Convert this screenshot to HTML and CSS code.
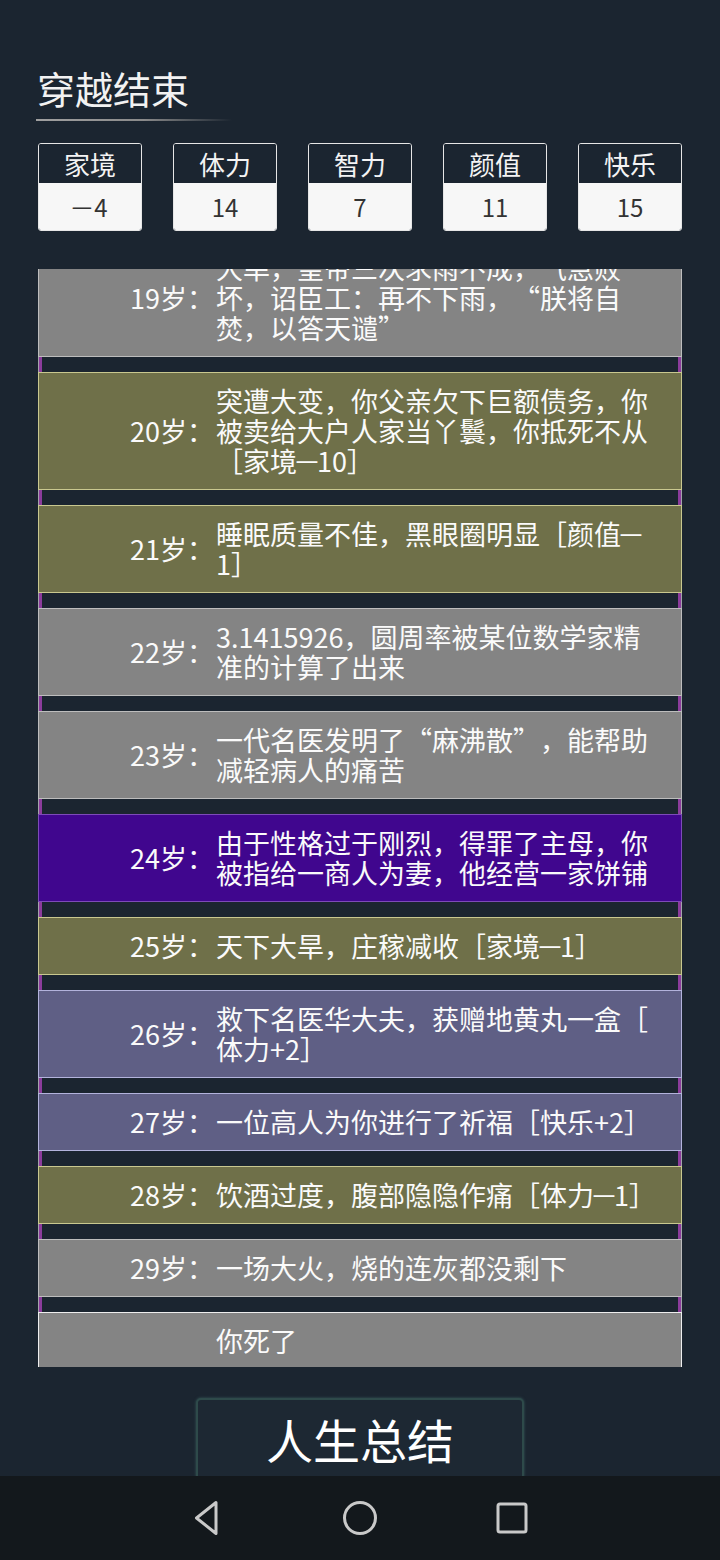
FILE: index.html
```html
<!DOCTYPE html>
<html lang="zh-CN">
<head>
<meta charset="utf-8">
<title>穿越结束</title>
<link rel="stylesheet" href="styles.css">
</head>
<body>
<div class="screen">
  <main class="app">
    <h1 class="title">穿越结束</h1>
    <div class="rule"></div>
    <div class="stats">
      <div class="stat"><div class="stat-name">家境</div><div class="stat-val"><span class="dash sdash">−</span>4</div></div>
      <div class="stat"><div class="stat-name">体力</div><div class="stat-val">14</div></div>
      <div class="stat"><div class="stat-name">智力</div><div class="stat-val">7</div></div>
      <div class="stat"><div class="stat-name">颜值</div><div class="stat-val">11</div></div>
      <div class="stat"><div class="stat-name">快乐</div><div class="stat-val">15</div></div>
    </div>
    <div class="list">
      <div class="list-inner">
        <div class="item gray"><div class="age">19岁：</div><div class="txt">大旱，皇帝三次求雨不成，气急败<br>坏，诏臣工：再不下雨，<span class="qo">“</span>朕将自<br>焚，以答天谴<span class="qc">”</span></div></div>
        <div class="gap"></div>
        <div class="item olive"><div class="age">20岁：</div><div class="txt">突遭大变，你父亲欠下巨额债务，你<br>被卖给大户人家当丫鬟，你抵死不从<br>［家境<span class="dash">−</span>10］</div></div>
        <div class="gap"></div>
        <div class="item olive"><div class="age">21岁：</div><div class="txt">睡眠质量不佳，黑眼圈明显［颜值<span class="dash">−</span><br>1］</div></div>
        <div class="gap"></div>
        <div class="item gray"><div class="age">22岁：</div><div class="txt">3.1415926，圆周率被某位数学家精<br>准的计算了出来</div></div>
        <div class="gap"></div>
        <div class="item gray"><div class="age">23岁：</div><div class="txt">一代名医发明了<span class="qo">“</span>麻沸散<span class="qc">”</span>，能帮助<br>减轻病人的痛苦</div></div>
        <div class="gap"></div>
        <div class="item purple"><div class="age">24岁：</div><div class="txt">由于性格过于刚烈，得罪了主母，你<br>被指给一商人为妻，他经营一家饼铺</div></div>
        <div class="gap"></div>
        <div class="item olive"><div class="age">25岁：</div><div class="txt">天下大旱，庄稼减收［家境<span class="dash">−</span>1］</div></div>
        <div class="gap"></div>
        <div class="item slate"><div class="age">26岁：</div><div class="txt">救下名医华大夫，获赠地黄丸一盒［<br>体力+2］</div></div>
        <div class="gap"></div>
        <div class="item slate"><div class="age">27岁：</div><div class="txt">一位高人为你进行了祈福［快乐+2］</div></div>
        <div class="gap"></div>
        <div class="item olive"><div class="age">28岁：</div><div class="txt">饮酒过度，腹部隐隐作痛［体力<span class="dash">−</span>1］</div></div>
        <div class="gap"></div>
        <div class="item gray"><div class="age">29岁：</div><div class="txt">一场大火，烧的连灰都没剩下</div></div>
        <div class="gap"></div>
        <div class="item gray last"><div class="age"></div><div class="txt">你死了</div></div>
      </div>
    </div>
    <button class="summary">人生总结</button>
  </main>
  <nav class="navbar">
    <svg class="nav-icon" width="40" height="40" viewBox="0 0 40 40"><path d="M28 4.5 L8.5 20 L28 35.5 Z" fill="none" stroke="#c9c9c9" stroke-width="3" stroke-linejoin="round"/></svg>
    <svg class="nav-icon" width="40" height="40" viewBox="0 0 40 40"><circle cx="20" cy="20" r="15.5" fill="none" stroke="#c9c9c9" stroke-width="3"/></svg>
    <svg class="nav-icon" width="40" height="40" viewBox="0 0 40 40"><rect x="6" y="6" width="28" height="28" rx="2" fill="none" stroke="#c9c9c9" stroke-width="3"/></svg>
  </nav>
</div>
</body>
</html>
```
FILE: styles.css
```css
* { box-sizing: border-box; }
html, body { margin: 0; padding: 0; }
body {
  width: 720px;
  height: 1560px;
  background: #1b2530;
  font-family: "Noto Sans CJK SC", "Noto Sans", sans-serif;
  color: #fff;
  overflow: hidden;
}
.screen { display: flex; flex-direction: column; height: 1560px; }
.app {
  height: 1476px;
  flex-shrink: 0;
  overflow: hidden;
  display: flex;
  flex-direction: column;
  padding: 0 38px;
  background: #1b2530;
}
.app > * { flex-shrink: 0; }
.title {
  margin: 66px 0 0 -1px;
  font-size: 38px;
  font-weight: 400;
  line-height: 44px;
  color: #f2f2f2;
}
.rule {
  margin: 9px 0 0 -2px;
  width: 196px;
  height: 2px;
  background: linear-gradient(to right, #a0a0a0 0%, #8a8a8a 55%, rgba(120,120,120,0) 100%);
}
.stats {
  margin-top: 22px;
  display: flex;
  justify-content: space-between;
}
.stat {
  width: 104px;
  height: 88px;
  border: 1px solid #e6e6e6;
  border-radius: 3px;
  overflow: hidden;
  display: flex;
  flex-direction: column;
}
.stat-name {
  height: 41px;
  background: #1b2530;
  font-size: 26px;
  line-height: 39px;
  text-align: center;
  color: #f4f4f4;
}
.stat-val {
  flex: 1;
  background: #f7f7f7;
  color: #333;
  font-size: 24px;
  line-height: 47px;
  text-align: center;
}
.list {
  margin-top: 38px;
  height: 1098px;
  overflow: hidden;
}
.list-inner { margin-top: -30px; }
.item {
  display: flex;
  align-items: center;
  padding: 13px 0;
  border: 1px solid #bdbdbd;
  font-size: 27px;
  line-height: 30px;
  color: #fafafa;
}
.age {
  width: 175px;
  text-align: right;
  white-space: nowrap;
  flex-shrink: 0;
}
.txt {
  margin-left: 2px;
  width: 460px;
  white-space: nowrap;
}
.qo, .qc {
  display: inline-block;
  width: 27px;
}
.qo { text-align: right; }
.qc { text-align: left; }
.dash {
  display: inline-block;
  width: 20px;
  transform: scaleX(1.6);
  text-align: center;
}
.sdash { width: 20px; margin-right: 2px; }
.gray { background: #848484; border-color: #bdbdbd; }
.olive { background: #6f7049; border-color: #c9c88f; }
.purple { background: #40068e; border-color: #7d4bb8; }
.slate { background: #5f5f85; border-color: #b3b3dc; }
.last { border-color: #eeeeee; }
.gap {
  height: 15px;
  border-left: 1px solid #a4a4ac;
  border-right: 1px solid #a4a4ac;
  background: linear-gradient(to right, #8c3c9c 0, #8c3c9c 3px, transparent 3px, transparent calc(100% - 3px), #8c3c9c calc(100% - 3px));
}
.summary {
  margin-top: 31px;
  align-self: center;
  width: 328px;
  height: 82px;
  background: #1d2833;
  border: 2px solid #2e4a4a;
  border-radius: 5px;
  box-shadow: 0 0 3px rgba(80,140,130,0.5);
  color: #fff;
  font-family: "Noto Sans CJK SC", sans-serif;
  font-size: 47px;
  font-weight: 400;
  line-height: 78px;
  padding: 0;
}
.navbar {
  height: 84px;
  flex-shrink: 0;
  background: #13181c;
  display: flex;
  align-items: center;
  justify-content: center;
  gap: 112px;
}
.nav-icon { display: block; }
```
